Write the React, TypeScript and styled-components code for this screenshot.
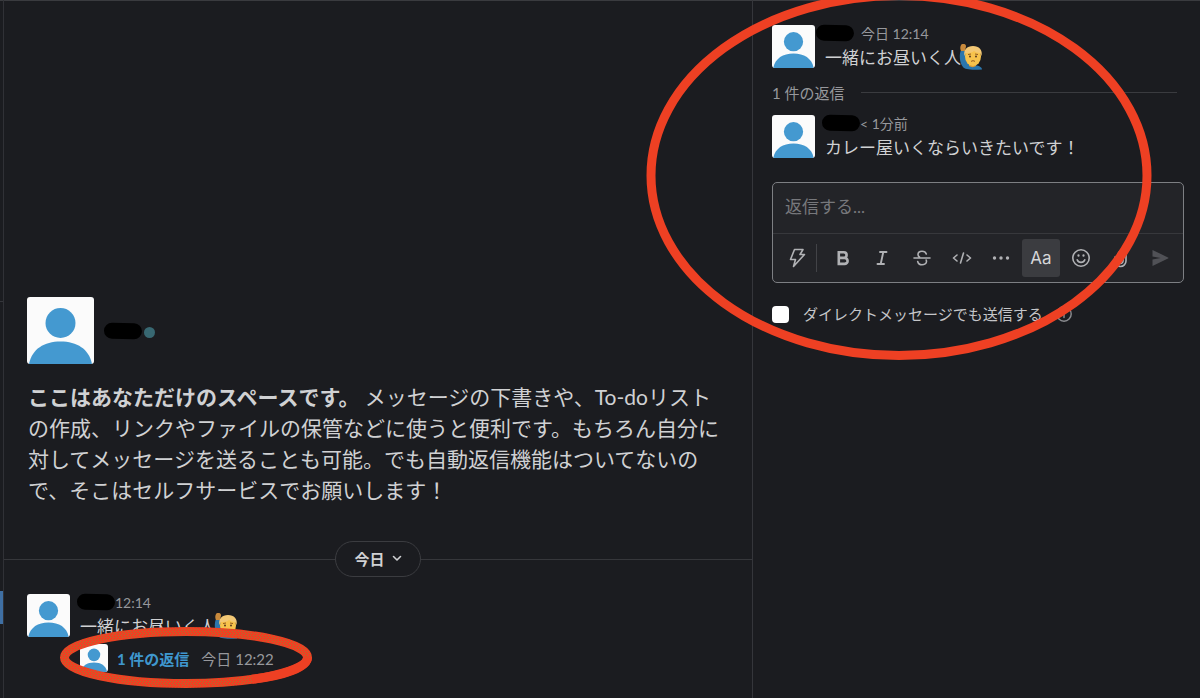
import React from "react";
import styled, { createGlobalStyle, css } from "styled-components";

const GlobalStyle = createGlobalStyle`
  *, *::before, *::after { box-sizing: border-box; }
  body {
    margin: 0;
    background: #1b1c20;
    color: #d0d1d3;
    font-family: Lato, "Noto Sans CJK JP", sans-serif;
  }
  p, h1 { margin: 0; font-weight: 400; }
  button { font: inherit; color: inherit; background: none; border: 0; padding: 0; cursor: pointer; }
`;

const Screen = styled.div`
  position: relative;
  display: grid;
  grid-template-columns: 4px minmax(0, 749fr) minmax(0, 447fr);
  min-height: 100vh;
  box-shadow: inset 0 1px #3a3b3f;
  overflow: hidden;
`;

const Rail = styled.nav`
  display: flex;
  flex-direction: column;
  justify-content: flex-end;
  border-right: 1px solid #303136;
  padding-bottom: 74px;
`;

const RailSection = styled.div`
  flex: 1;
  display: flex;
  flex-direction: column;
  &::before {
    content: "";
    flex: 0 0 302px;
    border-bottom: 1px solid #35363b;
  }
`;

const RailCurrent = styled.div`
  height: 33px;
  background: #3f6fa3;
`;

const Conversation = styled.main`
  display: flex;
  flex-direction: column;
  justify-content: flex-end;
  border-right: 1px solid #35363b;
  padding-bottom: 26px;
`;

const Intro = styled.section`
  padding: 0 23px;
`;

const Profile = styled.div`
  display: flex;
  align-items: center;
  gap: 10px;
  margin-bottom: 17px;
`;

const NameStatus = styled.div`
  display: flex;
  align-items: center;
  gap: 2px;
`;

const Presence = styled.span`
  width: 11px;
  height: 11px;
  margin-top: 3px;
  border-radius: 50%;
  background: #386872;
`;

const IntroText = styled.p`
  padding-left: 1px;
  font-size: 21px;
  line-height: 31px;
  strong { font-weight: 700; }
`;

const Picture = styled.svg<{ $size: number }>`
  display: block;
  flex: none;
  width: ${(p) => p.$size}px;
  height: ${(p) => p.$size}px;
  border-radius: 3px;
  background: #fbfbfb;
`;

const DayDivider = styled.div`
  display: flex;
  align-items: center;
  margin: 36px 0 17px;
  &::before, &::after {
    content: "";
    flex: 1;
    height: 1px;
    background: #36373b;
  }
`;

const DayButton = styled.button`
  display: flex;
  align-items: center;
  justify-content: center;
  gap: 7px;
  width: 86px;
  height: 36px;
  padding-bottom: 2px;
  border: 1px solid #3b3c40;
  border-radius: 18px;
  font-size: 15px;
  font-weight: 700;
`;

const Message = styled.article<{ $inset: number }>`
  display: flex;
  gap: 9px;
  padding: 0 ${(p) => p.$inset}px;
`;

const MessageBody = styled.div`
  display: flex;
  flex-direction: column;
  margin-top: -2px;
`;

const Meta = styled.div<{ $gap?: number }>`
  display: flex;
  align-items: center;
  gap: ${(p) => p.$gap ?? 0}px;
  height: 20px;
  font-size: 14px;
  color: #97989c;
`;

const NameMark = styled.span<{ $pull?: number }>`
  width: 38px;
  height: 16px;
  margin-left: -${(p) => p.$pull ?? 0}px;
  border-radius: 8px;
  background: #000;
  transform: rotate(1deg);
`;

const Line = styled.p`
  display: flex;
  align-items: center;
  height: 26px;
  padding-left: 1px;
  font-size: 17px;
  white-space: nowrap;
  svg { flex: none; margin: 2px 0 0 -2px; }
`;

const ThreadSummary = styled.div`
  display: flex;
  align-items: center;
  gap: 9px;
  margin-top: 6px;
  padding-left: 1px;
  font-size: 15px;
  color: #97989c;
`;

const ReplyLink = styled.a`
  margin-right: 3px;
  color: #3f97ce;
  font-weight: 700;
  text-decoration: none;
`;

const Thread = styled.aside`
  padding: 25px 16px 0 19px;
`;

const ReplyCount = styled.div`
  display: flex;
  align-items: center;
  gap: 16px;
  height: 22px;
  margin: 12px 7px 12px 0;
  font-size: 15px;
  color: #97989c;
  &::after {
    content: "";
    flex: 1;
    height: 1px;
    background: #3a3b3f;
  }
`;

const Composer = styled.form`
  margin-top: 23px;
  border: 1px solid #7d7f83;
  border-radius: 5px;
  background: #232428;
`;

const ReplyInput = styled.input`
  display: block;
  width: 100%;
  height: 51px;
  padding: 0 12px 4px;
  border: 0;
  border-bottom: 1px solid #37383c;
  outline: 0;
  background: none;
  color: inherit;
  font: inherit;
  font-size: 17px;
  &::placeholder { color: #77787c; opacity: 1; }
`;

const Toolbar = styled.div`
  display: flex;
  align-items: center;
  justify-content: space-between;
  height: 48px;
  padding: 0 4px;
`;

const Tool = styled.button<{ $active?: boolean; $muted?: boolean; $divided?: boolean }>`
  display: flex;
  align-items: center;
  justify-content: center;
  width: 38px;
  height: 38px;
  border-radius: 3px;
  color: ${(p) => (p.$muted ? "#505156" : "#b0b1b4")};
  ${(p) => p.$active && css`
    background: #3b3c40;
    color: #d5d6d8;
    font-family: Inter, sans-serif;
    font-size: 17px;
  `}
  ${(p) => p.$divided && css`
    width: 40px;
    height: 28px;
    margin-right: 5px;
    border-radius: 0;
    border-right: 1px solid #424347;
  `}
`;

const AlsoSend = styled.label`
  display: flex;
  align-items: center;
  width: max-content;
  margin-top: 19px;
  font-size: 15px;
  line-height: 24px;
  color: #c5c6c9;
  svg { margin-left: 12px; color: #8b8c90; }
`;

const Checkbox = styled.input`
  appearance: none;
  width: 17px;
  height: 17px;
  margin: 0 14px 0 0;
  border-radius: 4px;
  background: #fff;
`;

const Marks = styled.svg`
  position: absolute;
  left: 0;
  top: 0;
  width: 1200px;
  height: 698px;
  pointer-events: none;
`;

const Avatar = ({ size }: { size: number }) => (
  <Picture $size={size} viewBox="0 0 67 67" role="img" aria-label="avatar">
    <circle cx="33.5" cy="26" r="15" fill="#4499d0" />
    <path d="M2 67C5 52 17 44.500 33.500 44.500S62 52 65 67Z" fill="#4499d0" />
  </Picture>
);

const RaisedHand = () => (
  <svg width="24" height="28" viewBox="0 0 24 28" role="img" aria-label="raising hand">
    <path d="M2 7C0 11 .5 20 4 24c2 2.500 7 3 19 2.500 0-2-2-3.500-7-4.500L8 19 6 8Z" fill="#2b76ad" />
    <path d="M2 8C1 6 1 4 2 2c.5-1 1-1 2-1 2 0 3 .5 3 2.500L6 8Z" fill="#c98a3c" />
    <path d="M10 19h7v4c-2 1.500-5 1.500-7 0Z" fill="#dc9c35" />
    <ellipse cx="14" cy="13.500" rx="8" ry="9.500" fill="#f7c34c" />
    <path d="M5.500 13C4 7 8 3 14 3s10 4 8.500 10l-1.500-3c-3 0-4-1-6-2-2 2-5 2-8 2Z" fill="#f3c875" />
    <path d="M9 11.500l3-.5M16 11l3 .5M12 18.500c1-1 3-1 4 0" fill="none" stroke="#94591c" strokeWidth="1" />
    <circle cx="11" cy="13.500" r="1" fill="#5a3b20" />
    <circle cx="17" cy="13.500" r="1" fill="#5a3b20" />
  </svg>
);

const Icon = ({ children, size = 20 }: { children: React.ReactNode; size?: number }) => (
  <svg width={size} height={size} viewBox="0 0 20 20" fill="none" stroke="currentColor" strokeWidth="1.600" strokeLinecap="round" strokeLinejoin="round" aria-hidden="true">
    {children}
  </svg>
);

// Staggered rows of single dots that roughen the small ring.
const grainRows = Array.from({ length: 31 }, (_, i) => ({ y: 627 + i * 2, shift: i % 2 }));

export default function App() {
  return (
    <>
      <GlobalStyle />
      <Screen>
        <Rail aria-label="sidebar">
          <RailSection />
          <RailCurrent />
        </Rail>

        <Conversation>
          <Intro>
            <Profile>
              <Avatar size={67} />
              <NameStatus>
                <NameMark />
                <Presence />
              </NameStatus>
            </Profile>
            <IntroText>
              <strong>ここはあなただけのスペースです。</strong> メッセージの下書きや、To-doリストの作成、リンクやファイルの保管などに使うと便利です。もちろん自分に対してメッセージを送ることも可能。でも自動返信機能はついてないので、そこはセルフサービスでお願いします！
            </IntroText>
          </Intro>
          <DayDivider>
            <DayButton type="button">
              今日
              <svg width="10" height="8" viewBox="0 0 10 8" fill="none" stroke="currentColor" strokeWidth="1.600" strokeLinecap="round" strokeLinejoin="round" aria-hidden="true">
                <path d="M1.500 2.500 5 6l3.500-3.500" />
              </svg>
            </DayButton>
          </DayDivider>
          <Message $inset={23}>
            <Avatar size={43} />
            <MessageBody>
              <Meta>
                <NameMark $pull={2} />
                <time>12:14</time>
              </Meta>
              <Line>一緒にお昼いく人<RaisedHand /></Line>
              <ThreadSummary>
                <Avatar size={28} />
                <ReplyLink href="#thread">1 件の返信</ReplyLink>
                <time>今日 12:22</time>
              </ThreadSummary>
            </MessageBody>
          </Message>
        </Conversation>

        <Thread id="thread">
          <Message $inset={0}>
            <Avatar size={43} />
            <MessageBody>
              <Meta $gap={7}>
                <NameMark $pull={8} />
                <time>今日 12:14</time>
              </Meta>
              <Line>一緒にお昼いく人<RaisedHand /></Line>
            </MessageBody>
          </Message>
          <ReplyCount>1 件の返信</ReplyCount>
          <Message $inset={0}>
            <Avatar size={43} />
            <MessageBody>
              <Meta>
                <NameMark $pull={2} />
                <time>&lt; 1分前</time>
              </Meta>
              <Line>カレー屋いくならいきたいです！</Line>
            </MessageBody>
          </Message>

          <Composer>
            <ReplyInput type="text" aria-label="返信する" placeholder="返信する..." />
            <Toolbar>
              <Tool type="button" aria-label="ショートカット" $divided>
                <Icon><path d="M7.500 1.500h8.500l-3 5h4.500L6.500 18.500l2-7H3.500Z" /></Icon>
              </Tool>
              <Tool type="button" aria-label="太字">
                <Icon><path strokeWidth="2.600" strokeLinecap="butt" strokeLinejoin="miter" d="M5.800 4.300h5a2.800 2.800 0 0 1 0 5.600h-5Zm0 5.600h5.800a3 3 0 0 1 0 6H5.800Z" /></Icon>
              </Tool>
              <Tool type="button" aria-label="斜体">
                <Icon><path d="M8 4h6.500M5.500 16H12M11.300 4 8.700 16" strokeWidth="1.900" /></Icon>
              </Tool>
              <Tool type="button" aria-label="取り消し線">
                <Icon><path d="M2 10h16M14.300 6c-.5-1.700-2-2.800-4.300-2.800S6 4.500 6 6.500c0 1 .5 2 1.500 2.500M5.700 13.500c.5 2 2 3.300 4.300 3.300s4.500-1.300 4.500-3.300c0-.6-.1-1-.3-1.500" /></Icon>
              </Tool>
              <Tool type="button" aria-label="コード">
                <Icon><path d="M5 7l-3.500 3L5 13M15 7l3.500 3L15 13M11.500 5 8.500 15" /></Icon>
              </Tool>
              <Tool type="button" aria-label="その他">
                <Icon>
                  <g fill="currentColor" stroke="none">
                    <circle cx="3.500" cy="10" r="1.700" />
                    <circle cx="10" cy="10" r="1.700" />
                    <circle cx="16.500" cy="10" r="1.700" />
                  </g>
                </Icon>
              </Tool>
              <Tool type="button" $active>Aa</Tool>
              <Tool type="button" aria-label="絵文字">
                <Icon>
                  <circle cx="10" cy="10" r="8.200" />
                  <path d="M6.200 11.700c.6 1.700 2 2.700 3.800 2.700s3.200-1 3.800-2.700" />
                  <path d="M7.500 7.300v.4M12.500 7.300v.4" strokeWidth="2.200" />
                </Icon>
              </Tool>
              <Tool type="button" aria-label="添付">
                <Icon><path d="M5 9v4a5.500 5.500 0 0 0 11 0V7a4 4 0 0 0-8 0v6a2.500 2.500 0 0 0 5 0V8" /></Icon>
              </Tool>
              <Tool type="submit" aria-label="送信" $muted>
                <Icon><path fill="currentColor" stroke="none" d="M2.500 2 18 9.400q1 .6 0 1.200L2.500 18V11.500l8-1.500-8-1.500Z" /></Icon>
              </Tool>
            </Toolbar>
          </Composer>

          <AlsoSend>
            <Checkbox type="checkbox" />
            ダイレクトメッセージでも送信する
            <Icon size={18}>
              <circle cx="10" cy="10" r="8" />
              <path d="M10 9v5M10 6v.2" />
            </Icon>
          </AlsoSend>
        </Thread>

        <Marks viewBox="0 0 1200 698" fill="none" stroke="#ee4023" strokeWidth="9" aria-hidden="true">
          <defs>
            <mask id="ring" maskUnits="userSpaceOnUse" x="50" y="620" width="270" height="75">
              <ellipse cx="186" cy="657.500" rx="121.500" ry="26" stroke="#fff" strokeWidth="8" />
            </mask>
          </defs>
          <ellipse cx="899" cy="175.500" rx="248" ry="180" />
          <ellipse cx="186" cy="657.500" rx="121.500" ry="26" />
          <g mask="url(#ring)" stroke="#a8742f" strokeWidth="1" strokeDasharray="1 2">
            {grainRows.map(({ y, shift }) => (
              <path key={y} d={`M${58 + shift} ${y}.5H314`} />
            ))}
          </g>
          <path d="M307.500 657.500C307.500 667 285 675.500 252 679.300" />
        </Marks>
      </Screen>
    </>
  );
}
